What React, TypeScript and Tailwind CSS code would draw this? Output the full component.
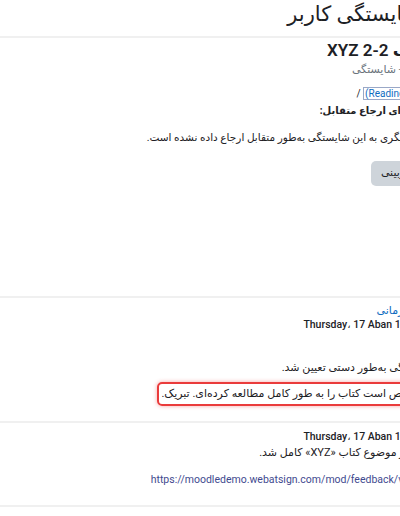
import React from "react";

export default function App() {
  return (
    <div className="w-[400px] h-[516px] overflow-hidden bg-white text-[#1d2125] font-['Roboto','DejaVu_Sans',sans-serif]">
      <div dir="rtl" className="w-[490px]">
        <header className="pr-[8px] pb-[8px] border-b-2 border-[#f0f0f0]">
          <h2 className="text-[21px] leading-[28px] whitespace-nowrap">شواهد شایستگی کاربر</h2>
        </header>

        <section className="pr-[20px]">
          <h3 className="mt-[1px] text-[17px] leading-[22px] font-semibold whitespace-nowrap">
            متن کتاب XYZ 2-2
          </h3>
          <p className="mt-[2px] text-[11px] leading-[14px] text-[#6a737b] whitespace-nowrap">
            مهارت مطالعه - شایستگی
          </p>

          <p className="mt-[9px] text-[10px] leading-[16px] whitespace-nowrap">
            <span>چارچوب </span>
            <span dir="ltr" className="border border-[#9aa8c7] px-[1px] text-[#0f6cbf]">
              (Reading Club)
            </span>
            <span> /</span>
          </p>
          <p className="mt-[1px] text-[10px] leading-[16px] font-bold whitespace-nowrap">
            مهارت‌های دارای ارجاع متقابل:
          </p>
          <p className="mt-[11px] text-[10.5px] leading-[16px] whitespace-nowrap">
            هیچ شایستگی دیگری به این شایستگی به‌طور متقابل ارجاع داده نشده است.
          </p>

          <button className="mt-[15px] h-[25px] px-[10px] rounded-[5px] bg-[#ced4da] text-[11px] text-[#1d2125] whitespace-nowrap">
            درخواست بازبینی
          </button>
        </section>

        <div className="mt-[110px] border-b-2 border-[#f0f0f0]" />

        <section className="pr-[20px] pb-[15px]">
          <a className="block mt-[6px] text-[11px] leading-[14px] text-[#0f6cbf] whitespace-nowrap">
            کاربر ادمین سازمانی
          </a>
          <p className="text-[10.5px] leading-[14px] font-medium whitespace-nowrap">
            Thursday، 17 Aban 1403، 10:23 AM
          </p>
          <p className="mt-[29px] text-[11px] leading-[14px] whitespace-nowrap">
            وضعیت شایستگی به‌طور دستی تعیین شد.
          </p>
          <div className="mt-[7px] ml-[157px] h-[24px] flex items-center border-2 border-[#ea3b3b] rounded-[5px] shadow-[0_0_4px_rgba(234,59,59,0.45)]">
            <span className="text-[11px] whitespace-nowrap">
              حالا کاملاً مشخص است کتاب را به طور کامل مطالعه کرده‌ای. تبریک.
            </span>
          </div>
        </section>

        <div className="border-b-2 border-[#f0f0f0]" />

        <section className="pr-[20px] pb-[18px]">
          <p className="mt-[7px] text-[10.5px] leading-[14px] font-medium whitespace-nowrap">
            Thursday، 17 Aban 1403، 10:23 AM
          </p>
          <p className="mt-[2px] text-[11px] leading-[14px] whitespace-nowrap">
            فعالیت بازدید از موضوع کتاب «XYZ» کامل شد.
          </p>
          <a className="block mt-[13px] text-[10.5px] leading-[14px] text-[#3f4a8f] whitespace-nowrap">
            https://moodledemo.webatsign.com/mod/feedback/view.php?id=52
          </a>
        </section>

        <div className="border-b-2 border-[#f0f0f0]" />
      </div>
    </div>
  );
}
